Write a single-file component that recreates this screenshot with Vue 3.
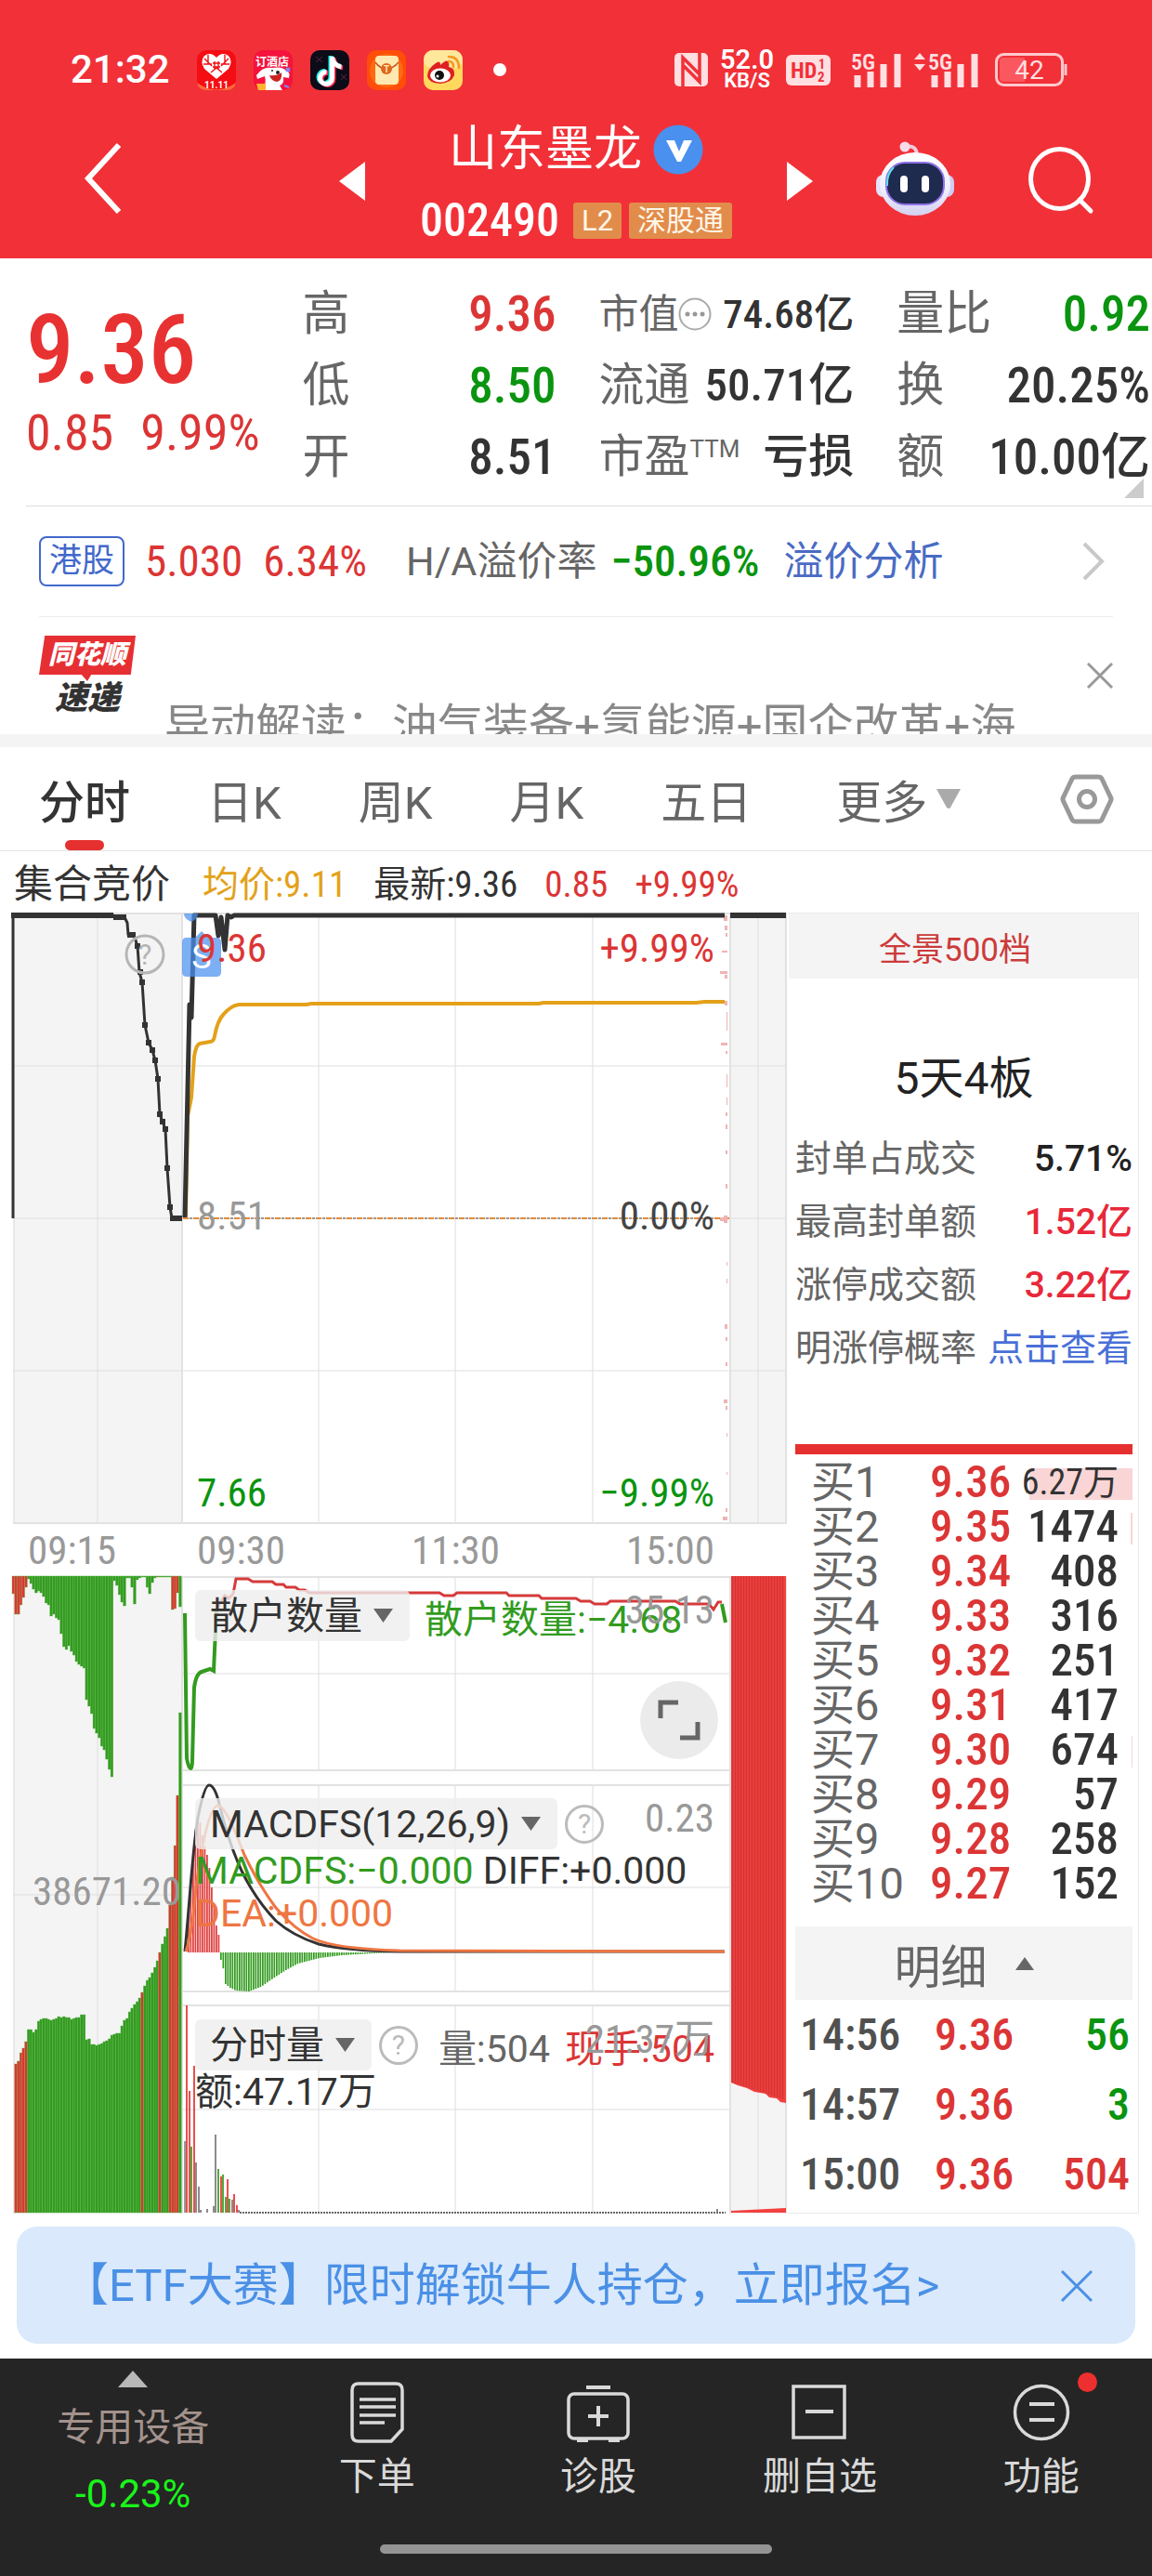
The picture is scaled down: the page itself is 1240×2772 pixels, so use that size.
<script setup>
const bids = [
  ['买1', '9.36', '6.27万', 111],
  ['买2', '9.35', '1474', 2],
  ['买3', '9.34', '408', 0],
  ['买4', '9.33', '316', 0],
  ['买5', '9.32', '251', 0],
  ['买6', '9.31', '417', 0],
  ['买7', '9.30', '674', 1],
  ['买8', '9.29', '57', 0],
  ['买9', '9.28', '258', 0],
  ['买10', '9.27', '152', 0]
]
const trades = [
  ['14:56', '9.36', '56', 'down'],
  ['14:57', '9.36', '3', 'down'],
  ['15:00', '9.36', '504', 'up']
]

const RED = '#e5302f'
const GREEN = '#329b1f'

// Call auction: unmatched volume hangs from the top, matched volume grows from the bottom
const unmatched = [19, 41, 41, 31, 23, 12, 3, 8, 14, 18, 16, 18, 22, 29, 31, 43, 41, 45, 47, 62, 76, 79, 75, 81, 85, 92, 95, 97, 99, 133, 140, 148, 164, 169, 174, 183, 187, 197, 208, 216, 5, 10, 20, 28, 32, 2, 2, 12, 30, 4, 2, 1, 1, 12, 19, 7, 2, 1, 1, 1, 1, 1, 1, 36, 35, 18, 33]
const unmatchedRed = [0, 1, 2, 3, 4, 5, 57, 63, 64, 65]
const matched = [0, 160, 163, 172, 177, 184, 197, 197, 194, 197, 206, 208, 209, 209, 208, 207, 208, 209, 211, 210, 211, 210, 210, 208, 209, 210, 210, 213, 213, 186, 187, 181, 181, 180, 181, 182, 184, 185, 187, 191, 192, 193, 193, 201, 207, 209, 216, 220, 224, 227, 231, 237, 244, 250, 253, 258, 264, 271, 280, 289, 297, 306, 331, 361, 395, 449, 538]
const matchedRed = [1, 2, 3, 4, 5, 51, 58, 62, 63, 64, 65]
const pitch = 2.72
const topBars = unmatched.map((h, i) => ({ x: 13 + i * pitch, h, c: unmatchedRed.includes(i) ? RED : GREEN }))
const bottomBars = matched.map((h, i) => ({ x: 13 + i * pitch, h, c: matchedRed.includes(i) ? RED : GREEN }))

const macdUp = [39, 72, 96, 131, 147, 140, 126, 114, 105, 91, 70, 51, 29, 19].map((h, i) => ({ x: 202 + i * 2.5, h }))
const knots = [[237, 8], [240, 19], [242, 34], [247, 38], [253, 41], [267, 42], [280, 37], [293, 28], [307, 19], [320, 12], [343, 6], [367, 3], [400, 1], [420, 0]]
const macdDown = []
for (let x = 237; x < 415; x += 2.5) {
  const k = knots.findIndex((p, i) => i < knots.length - 1 && x >= p[0] && x < knots[i + 1][0])
  const [a, b] = [knots[k], knots[k + 1]]
  macdDown.push({ x, h: a[1] + ((b[1] - a[1]) * (x - a[0])) / (b[0] - a[0]) })
}

const volume = [
  [199, 77, '#888'], [201, 223, RED], [204, 131, RED], [206, 71, GREEN], [209, 158, RED], [211, 54, '#777'], [214, 28, '#777'],
  [216, 3, '#777'], [223, 4, '#777'], [230, 7, '#777'], [232, 84, '#777'], [235, 47, GREEN], [238, 39, RED], [240, 41, GREEN],
  [243, 17, GREEN], [245, 36, RED], [247, 15, GREEN], [250, 14, '#777'], [252, 20, RED], [255, 8, RED], [257, 3, '#777'], [772, 4, '#777']
]
const ticks = [
  [984, 6, 4], [995, 5, 3], [1003, 4, 2], [1022, 2, 6], [1044, 3, 8], [1048, 4, 3], [1076, 5, 3], [1088, 20, 1], [1121, 3, 7],
  [1130, 3, 2], [1155, 14, 1], [1180, 8, 1], [1196, 4, 2], [1209, 5, 2], [1237, 4, 2], [1273, 5, 2], [1307, 8, 4], [1309, 4, 8],
  [1357, 4, 1], [1375, 5, 1], [1424, 5, 3], [1438, 4, 2], [1465, 4, 2], [1505, 4, 4], [1512, 4, 2], [1541, 4, 1], [1583, 3, 1], [1622, 4, 2], [1631, 4, 5]
]
</script>

<template>
  <div class="page">
    <header class="top">
      <div class="status">
        <span class="clock">21:32</span>
        <div class="apps">
          <svg viewBox="0 0 42 43">
            <rect width="42" height="43" rx="10" fill="#f40d12" />
            <path d="M0 35Q21 50 42 35Q40 43 32 43H10Q2 43 0 35Z" fill="#ff6a3a" />
            <path d="M21 31L8 20Q3 12 8 6Q15 1 21 8Q27 1 34 6Q39 12 34 20Z" fill="#fff" />
            <path d="M8 9l8 8M34 9l-8 8M12 5v10M30 5v10M7 15h9M35 15h-9M15 24l6-5 6 5M17 14h8M17 18h8M19 12v8M23 12v8" stroke="#f40d12" stroke-width="1.4" fill="none" />
            <text x="21" y="41" text-anchor="middle" font-size="10" font-weight="700" fill="#fff">11.11</text>
          </svg>
          <svg viewBox="0 0 42 43">
            <rect width="42" height="43" rx="10" fill="#f5123c" />
            <text x="20" y="17" text-anchor="middle" font-size="12" font-weight="700" fill="#fff">订酒店</text>
            <path d="M3 27Q10 17 20 19Q31 17 35 22Q40 24 38 30L32 29Q33 37 28 38L31 43H10Q14 35 12 28L4 31Z" fill="#fff" />
            <path d="M17 27Q25 28 30 24Q31 33 25 34Q19 33 17 27Z" fill="#c22" />
            <circle cx="26" cy="24" r="2" fill="#222" /><circle cx="20" cy="22" r="1" fill="#222" />
            <path d="M3 36h10v7H5z" fill="#ffb52e" /><path d="M35 19l4 4m0-4l-4 4M33 38l5 2" stroke="#7e8cff" stroke-width="2" />
          </svg>
          <svg viewBox="0 0 42 43">
            <rect width="42" height="43" rx="10" fill="#0b0c18" />
            <path d="M6 7l7 6M13 7l-7 6M33 26l6 6M39 26l-6 6" stroke="#5a2340" stroke-width="1" />
            <g fill="none" stroke-width="5">
              <path d="M22 6v23a6.500 6.500 0 1 1-6-6.500M22 7q2 9 10 10" stroke="#25f4ee" />
              <path d="M25 8v23a6.500 6.500 0 1 1-6-6.500M25 9q2 9 10 10" stroke="#fe2c55" />
              <path d="M23.500 7v23a6.500 6.500 0 1 1-6-6.500M23.500 8q2 9 10 10" stroke="#fff" />
            </g>
          </svg>
          <svg viewBox="0 0 42 43">
            <rect width="42" height="43" rx="10" fill="#ff4d0a" /><circle cx="21" cy="22" r="18" fill="#ff6a12" />
            <rect x="9" y="6" width="25" height="31" rx="4" fill="#ffe9b0" />
            <path d="M9 13q5 7 12 7t13-7" fill="none" stroke="#c9521b" stroke-width="1.500" />
            <circle cx="21" cy="20" r="6" fill="#e1651c" />
            <text x="21" y="24" text-anchor="middle" font-size="10" font-weight="700" fill="#ffe9b0">T</text>
          </svg>
          <svg viewBox="0 0 42 43">
            <rect width="42" height="43" rx="10" fill="#ffd95e" /><rect width="42" height="20" rx="10" fill="#ffe79c" />
            <path d="M4 28Q4 20 13 14Q18 10 18 16Q24 10 26 12Q28 14 27 18Q34 19 33 27Q30 35 18 36Q5 35 4 28Z" fill="#df2020" />
            <ellipse cx="18" cy="27" rx="11" ry="7.500" fill="#fff" /><circle cx="17" cy="27" r="5" fill="#111" /><circle cx="15" cy="28" r="1.500" fill="#fff" />
            <path d="M27 12q5 0 5 6M27 7q11 0 11 12" fill="none" stroke="#f59a23" stroke-width="2.500" stroke-linecap="round" />
          </svg>
          <i class="more-dot"></i>
        </div>
        <div class="signals">
          <svg class="nfc" viewBox="0 0 36 36">
            <rect width="36" height="36" rx="5" fill="#ffdfe1" />
            <path d="M9 36V5l17 17M27 0v31L10 14" fill="none" stroke="#f23038" stroke-width="3.500" />
          </svg>
          <span class="speed"><b>52.0</b><small>KB/S</small></span>
          <svg class="hd" viewBox="0 0 48 33">
            <rect width="48" height="33" rx="6" fill="#ffdfe1" />
            <text x="5" y="25" font-size="24" font-weight="700" class="cond" fill="#f23038">HD</text>
            <text x="35" y="15" font-size="14" font-weight="700" class="cond" fill="#f23038">1</text>
            <text x="34" y="29" font-size="15" font-weight="700" class="cond" fill="#f23038">2</text>
          </svg>
          <svg class="cell" viewBox="0 0 56 40">
            <text x="0" y="20" font-size="24" class="cond" fill="#ffdfe1" font-weight="600">5G</text>
            <path d="M7 26v13M21 22v17M35 14v25M50 3v36" stroke="#ffdfe1" stroke-width="7" />
          </svg>
          <svg class="cell wide" viewBox="0 0 71 40">
            <path d="M0 9l6-7 6 7zM0 14l6 7 6-7z" fill="#ffdfe1" />
            <text x="15" y="20" font-size="24" class="cond" fill="#ffdfe1" font-weight="600">5G</text>
            <path d="M22 26v13M36 22v17M50 14v25M65 3v36" stroke="#ffdfe1" stroke-width="7" />
          </svg>
          <svg class="battery" viewBox="0 0 78 36">
            <rect x="1.500" y="1.500" width="71" height="33" rx="8" fill="none" stroke="#ffc9cc" stroke-width="3" />
            <path d="M9 5h23v26H9q-4 0-4-4V9q0-4 4-4z" fill="#fa575e" />
            <path d="M76 12v12" stroke="#ffc9cc" stroke-width="3" />
            <text x="37" y="28" text-anchor="middle" font-size="28" fill="#ffdfe1">42</text>
          </svg>
        </div>
      </div>

      <nav class="nav">
        <div class="nav-left">
          <button aria-label="返回"><svg width="42" height="78" viewBox="0 0 42 78"><path d="M38 3L5 39L38 75" fill="none" stroke="#fff" stroke-width="6" /></svg></button>
        </div>
        <div class="nav-mid">
          <button aria-label="上一只"><svg width="28" height="42" viewBox="0 0 28 42"><path d="M28 0v42L0 21z" fill="#fff" /></svg></button>
          <div class="title">
            <h1>山东墨龙
              <svg width="54" height="54" viewBox="0 0 54 54"><circle cx="27" cy="27" r="26.500" fill="#4a90ee" /><path d="M14 17h9l5 12 5-12h9L30 40h-4z" fill="#fff" /></svg>
            </h1>
            <p><span class="code num">002490</span><span class="tag">L2</span><span class="tag">深股通</span></p>
          </div>
          <button aria-label="下一只"><svg width="28" height="42" viewBox="0 0 28 42"><path d="M0 0v42L28 21z" fill="#fff" /></svg></button>
        </div>
        <div class="nav-right">
          <button aria-label="智能助手">
            <svg width="84" height="80" viewBox="0 0 84 80">
              <defs><linearGradient id="shell" x1="0" y1="0" x2="0" y2="1"><stop offset="0" stop-color="#fff" /><stop offset=".6" stop-color="#f0eefc" /><stop offset="1" stop-color="#d3d0f0" /></linearGradient></defs>
              <path d="M31 6q13-3 13 10" fill="none" stroke="#f0c9dc" stroke-width="4" /><circle cx="31" cy="6" r="5.500" fill="#f6dbe8" />
              <rect x="0" y="36" width="16" height="24" rx="8" fill="#e3e2fa" /><rect x="68" y="36" width="16" height="24" rx="8" fill="#cfcdf3" />
              <ellipse cx="42" cy="46" rx="38" ry="34" fill="url(#shell)" />
              <rect x="11" y="23" width="62" height="45" rx="20" fill="#1f2a4f" stroke="#8f73e8" stroke-width="2" />
              <path d="M19 28Q11 36 12 48" fill="none" stroke="#5fe0e8" stroke-width="2" />
              <path d="M30 41v10M53 41v10" stroke="#fff" stroke-width="8" stroke-linecap="round" />
            </svg>
          </button>
          <button aria-label="搜索"><svg width="70" height="72" viewBox="0 0 70 72"><ellipse cx="33.500" cy="34.500" rx="31" ry="32" fill="none" stroke="#fff" stroke-width="5" /><path d="M55 57l12 12" stroke="#fff" stroke-width="5" stroke-linecap="round" /></svg></button>
        </div>
      </nav>
    </header>

    <section class="quote">
      <div class="last up num">
        <strong>9.36</strong>
        <p><span>0.85</span><span>9.99%</span></p>
      </div>
      <dl>
        <div><dt>高</dt><dd class="up">9.36</dd></div>
        <div><dt>低</dt><dd class="down">8.50</dd></div>
        <div><dt>开</dt><dd>8.51</dd></div>
      </dl>
      <dl class="caps">
        <div class="tight"><dt>市值<svg width="36" height="36" viewBox="0 0 36 36"><circle cx="18" cy="18" r="16.500" fill="none" stroke="#aaa" stroke-width="2" /><g fill="#999"><circle cx="10" cy="18" r="2.500" /><circle cx="18" cy="18" r="2.500" /><circle cx="26" cy="18" r="2.500" /></g></svg></dt><dd>74.68亿</dd></div>
        <div><dt>流通</dt><dd>50.71亿</dd></div>
        <div><dt>市盈<sup>TTM</sup></dt><dd>亏损</dd></div>
      </dl>
      <dl>
        <div><dt>量比</dt><dd class="down">0.92</dd></div>
        <div><dt>换</dt><dd>20.25%</dd></div>
        <div><dt>额</dt><dd>10.00亿</dd></div>
      </dl>
      <i class="corner"></i>
    </section>

    <section class="hk">
      <span class="hk-tag">港股</span>
      <span class="num up hk-price">5.030</span>
      <span class="num up hk-pct">6.34%</span>
      <span class="hk-label">H/A溢价率</span>
      <span class="num down hk-rate">−50.96%</span>
      <a href="#premium">溢价分析</a>
      <svg class="hk-arrow" width="26" height="44" viewBox="0 0 26 44"><path d="M3 3l19 19L3 41" fill="none" stroke="#c8c8c8" stroke-width="4" /></svg>
    </section>

    <section class="news">
      <div class="logo"><span class="logo-top">同花顺</span><span class="logo-bottom">速递</span></div>
      <p>异动解读：油气装备+氢能源+国企改革+海</p>
      <button aria-label="关闭"><svg width="28" height="28" viewBox="0 0 28 28"><path d="M1 1l26 26M27 1L1 27" stroke="#999" stroke-width="3" /></svg></button>
    </section>

    <nav class="tabs">
      <button class="active">分时</button>
      <button>日K</button>
      <button>周K</button>
      <button>月K</button>
      <button>五日</button>
      <button class="more">更多<svg width="26" height="21" viewBox="0 0 26 21"><path d="M0 0h26L15 20q-2 2-4 0z" fill="#aaa" /></svg></button>
      <button class="settings" aria-label="设置"><svg width="56" height="54" viewBox="0 0 56 54"><path d="M16 3h24q3 0 4 2l9 19q2 3 0 6l-9 19q-1 2-4 2H16q-3 0-4-2L3 30q-2-3 0-6l9-19q1-2 4-2z" fill="none" stroke="#999" stroke-width="5" /><circle cx="28" cy="27" r="8.500" fill="none" stroke="#999" stroke-width="5" /></svg></button>
    </nav>

    <div class="legend num">
      <span class="legend-name">集合竞价</span>
      <span class="avg">均价:9.11</span>
      <span>最新:9.36</span>
      <span class="up">0.85</span>
      <span class="up">+9.99%</span>
    </div>

    <main class="board">
      <div class="charts">
        <div class="plot">
          <svg viewBox="14 981 834 659" preserveAspectRatio="none">
            <path d="M14 982h183v657H14zM785 982h62v657H785z" fill="#f4f4f4" />
            <path d="M15 982v657M105 982v657M343 982v657M490 982v657M638 982v657M816 982v657M14 1146h833M14 1310h833M14 1474h833" class="grid" />
            <path d="M14 982h833M14 1638h833M196 982v657M786 982v657M846 982v657" class="frame" />
            <path d="M197 1310h588" stroke="#999" stroke-width="2" stroke-dasharray="3 8" stroke-dashoffset="-7" />
            <path d="M197 1310h588" stroke="#e08b3a" stroke-width="2" stroke-dasharray="6 5" />
            <g fill="#f0b3b3"><rect v-for="(t, i) in ticks" :key="i" :x="783 - t[2]" :y="t[0]" :width="t[2]" :height="t[1]" /></g>
            <path d="M200 1308L202 1200L206 1180L209 1136Q211 1123 215 1122L226 1120Q230 1120 231 1114Q234 1097 241 1090Q250 1080 258 1080H330L335 1079H580L585 1078H750L758 1077H780" fill="none" stroke="#e3a11a" stroke-width="4" />
            <path d="M14 1310V984H122L125 986H134L137 992L138 1005H144L148 1017L150 1045L153 1056L156 1102L160 1121L164 1129L167 1140L170 1160L172 1198L175 1206L178 1214L180 1256L183 1298L185 1310H196" class="price" stroke-width="3" />
            <path d="M12 984H122M122 986H136M137 1005h9M157 1121h6M183 1310h13" class="price" stroke-width="6" />
            <path d="M148 1014v6M151 1042v6M153 1053v6M156 1099v6M164 1126v6M167 1137v6M170 1157v6M172 1195v6M175 1203v6M178 1211v6M180 1253v6M183 1295v6" class="price" stroke-width="6" />
            <path d="M199 1309L204 1080L206 1094L209 984H232L235 1006L238 986L242 1021L245 984L249 986L252 984H780" class="price" stroke-width="5" />
            <path d="M786 984h60" class="price" stroke-width="6" />
            <path d="M198 982h15q0 6-7 9q-8-3-8-9zM210 1008l7-7 7 7h9q5 0 5 5v32q0 5-5 5h-32q-5 0-5-5v-32q0-5 5-5z" fill="#4a90ee" fill-opacity=".72" />
            <text x="217" y="1041" text-anchor="middle" font-size="36" fill="#fff">S</text>
            <circle cx="156" cy="1026" r="20" fill="none" stroke="#b5b5b5" stroke-width="3" />
            <text x="156" y="1037" text-anchor="middle" font-size="31" fill="#b5b5b5">?</text>
          </svg>
          <div class="plot-labels num">
            <p class="up"><span>9.36</span><span>+9.99%</span></p>
            <p class="mid"><span class="muted">8.51</span><span>0.00%</span></p>
            <p class="down"><span>7.66</span><span>−9.99%</span></p>
          </div>
        </div>

        <div class="axis num">
          <span>09:15</span>
          <p><span>09:30</span><span>11:30</span><span>15:00</span></p>
        </div>

        <div class="lower">
          <svg viewBox="14 1695 834 686" preserveAspectRatio="none">
            <path d="M14 1695h183v686H14zM785 1695h62v686H785z" fill="#f4f4f4" />
            <path d="M15 1695v686M105 1695v686M816 1695v686M14 2038h183M343 1695v209M490 1695v209M638 1695v209M343 1920v222M490 1920v222M638 1920v222M343 2157v223M490 2157v223M638 2157v223M197 1800h588M197 2030h588M197 2269h588" class="grid" />
            <path d="M197 1696h588M197 1904h588M197 1920h588M197 2142h588M197 2157h588M196 1695v686M786 1695v686M846 1695v686" class="frame" />
            <g stroke="#5db54b" stroke-width=".4">
              <rect v-for="(b, i) in topBars" :key="'t' + i" :x="b.x" y="1695" width="2.700" :height="b.h" :fill="b.c" />
              <rect v-for="(b, i) in bottomBars" :key="'b' + i" :x="b.x" :y="2380 - b.h" width="2.700" :height="b.h" :fill="b.c" />
            </g>
            <path d="M787 1695h59v567l-6-1l-4-4l-8-1l-4-4l-12-2l-8-4l-10-3l-7-3zM787 2380v-2l59-3v5z" fill="#f2413f" />
            <path v-for="i in 19" :key="'s' + i" :d="`M${785.5 + i * 3} 1695V${2239 + i}`" stroke="#d23433" stroke-width="1.500" />

            <path d="M199 1735L201 1891Q203 1902 205 1902Q207 1902 207 1894L209 1815Q211 1800 217 1798L226 1795L230 1797L233 1731" fill="none" :stroke="GREEN" stroke-width="4" />
            <path d="M233 1731L237 1724L242 1716L246 1719L251 1714L254 1698H267L272 1701H293L297 1704H305L308 1707H318L322 1710H328L333 1713H473L478 1716H488L492 1713H545L548 1716H580L583 1719H620L625 1722H635L640 1725H653L657 1722H727L732 1725H763L768 1731L773 1723H777" fill="none" stroke="#d63a3a" stroke-width="3" />
            <path d="M777 1725L781 1745" :stroke="GREEN" stroke-width="4" />

            <rect v-for="(b, i) in macdUp" :key="'u' + i" :x="b.x" :y="2100 - b.h" width="1.800" :height="b.h" fill="#e04444" />
            <rect v-for="(b, i) in macdDown" :key="'d' + i" :x="b.x" y="2100" width="1.700" :height="b.h" :fill="GREEN" />
            <path d="M199 2099C204 2050 207 1990 213 1955Q220 1920 225 1920Q231 1920 236 1940Q246 1982 260 2012Q275 2043 297 2066Q315 2082 343 2091Q373 2098 430 2099H780" fill="none" stroke="#333" stroke-width="3" />
            <path d="M200 2099Q207 2080 211 2030Q223 1942 235 1942Q243 1942 263 1995Q279 2028 297 2052Q317 2075 337 2085Q360 2096 430 2098L780 2099" fill="none" stroke="#ee7642" stroke-width="3" />

            <rect v-for="(v, i) in volume" :key="'v' + i" :x="v[0] - 1" :y="2380 - v[1]" width="2" :height="v[1]" :fill="v[2]" fill-opacity=".85" />
            <path d="M258 2380H781" stroke="#666" stroke-width="2" stroke-dasharray="2 1" />
          </svg>

          <span class="auction-value num">38671.20</span>

          <div class="panels">
            <div class="panel">
              <span class="scale num">35.13</span>
              <div class="panel-head">
                <label class="picker"><select aria-label="散户数量指标"><option>散户数量</option></select><i></i></label>
                <span class="green">散户数量:−4.68</span>
              </div>
              <button class="expand" aria-label="全屏"><svg width="46" height="46" viewBox="0 0 46 46"><path d="M3 21V4h19M43 25v17H24" fill="none" stroke="#666" stroke-width="5" /></svg></button>
            </div>
            <div class="panel">
              <span class="scale num">0.23</span>
              <div class="panel-head">
                <label class="picker"><select aria-label="MACD指标"><option>MACDFS(12,26,9)</option></select><i></i></label>
                <button class="help" aria-label="指标说明">?</button>
              </div>
              <p><span class="green">MACDFS:−0.000</span> DIFF:+0.000<br><span class="orange">DEA:+0.000</span></p>
            </div>
            <div class="panel">
              <span class="scale num">21.37万</span>
              <div class="panel-head">
                <label class="picker"><select aria-label="成交量指标"><option>分时量</option></select><i></i></label>
                <button class="help" aria-label="指标说明">?</button>
                <span class="vol">量:504</span>
                <span class="up hand">现手:504</span>
              </div>
              <p>额:47.17万</p>
            </div>
          </div>
        </div>
      </div>

      <aside class="book">
        <button class="depth">全景500档</button>
        <h2>5天4板</h2>
        <dl class="facts">
          <div><dt>封单占成交</dt><dd>5.71%</dd></div>
          <div><dt>最高封单额</dt><dd class="hot">1.52亿</dd></div>
          <div><dt>涨停成交额</dt><dd class="hot">3.22亿</dd></div>
          <div><dt>明涨停概率</dt><dd><a href="#odds">点击查看</a></dd></div>
        </dl>
        <table class="bids">
          <tbody>
            <tr v-for="b in bids" :key="b[0]">
              <th scope="row">{{ b[0] }}</th>
              <td class="up num">{{ b[1] }}</td>
              <td class="qty num" :class="{ small: b[2].includes('万') }"><i :style="{ width: b[3] + 'px' }"></i><span>{{ b[2] }}</span></td>
            </tr>
          </tbody>
        </table>
        <button class="detail">明细<svg width="20" height="14" viewBox="0 0 20 14"><path d="M0 14L10 0l10 14z" fill="#666" /></svg></button>
        <table class="trades num">
          <tbody>
            <tr v-for="t in trades" :key="t[0]"><td>{{ t[0] }}</td><td class="up">{{ t[1] }}</td><td :class="t[3]">{{ t[2] }}</td></tr>
          </tbody>
        </table>
      </aside>
    </main>

    <div class="banner">
      <a href="#etf">【ETF大赛】限时解锁牛人持仓，立即报名&gt;</a>
      <button aria-label="关闭"><svg width="34" height="34" viewBox="0 0 34 34"><path d="M1 1l32 32M33 1L1 33" stroke="#4a90e6" stroke-width="3" /></svg></button>
    </div>

    <footer class="dock">
      <div class="dock-items">
        <button class="sector">
          <svg width="32" height="18" viewBox="0 0 32 18"><path d="M16 0l16 18H0z" fill="#b8b8b8" /></svg>
          <span>专用设备</span>
          <b>-0.23%</b>
        </button>
        <button>
          <svg width="68" height="68" viewBox="0 0 68 68"><path d="M14 3h40q7 0 7 7v42L49 65H14q-7 0-7-7V10q0-7 7-7z" fill="none" stroke="#d9d9d9" stroke-width="3.500" /><path d="M15 20h39M15 28h39M15 37h39M15 45h27" stroke="#d9d9d9" stroke-width="3.500" /></svg>
          <span>下单</span>
        </button>
        <button>
          <svg width="68" height="68" viewBox="0 0 68 68"><rect x="2" y="14" width="64" height="48" rx="6" fill="none" stroke="#d9d9d9" stroke-width="3.500" /><path d="M21 7h26M23 38h22M34 27v22M11 64h12M45 64h12" stroke="#d9d9d9" stroke-width="4" /></svg>
          <span>诊股</span>
        </button>
        <button>
          <svg width="68" height="68" viewBox="0 0 68 68"><rect x="6" y="6" width="55" height="55" fill="none" stroke="#d9d9d9" stroke-width="3.500" /><path d="M19 33h30" stroke="#d9d9d9" stroke-width="4" /></svg>
          <span>删自选</span>
        </button>
        <button class="features">
          <svg width="68" height="68" viewBox="0 0 68 68"><circle cx="34" cy="34" r="28.500" fill="none" stroke="#d9d9d9" stroke-width="3.500" /><path d="M21 25h27M21 42h27" stroke="#d9d9d9" stroke-width="4" /></svg>
          <span>功能</span>
          <i></i>
        </button>
      </div>
      <i class="home"></i>
    </footer>
  </div>
</template>

<style>
body { background: #fff; }
</style>

<style scoped>
.page { font-family: Roboto, "Noto Sans CJK SC", sans-serif; color: #333; background: #fff; overflow: hidden; }
.page * { box-sizing: border-box; }
.num, .cond { font-family: "Roboto Condensed", Roboto, "Noto Sans CJK SC", sans-serif; }
button { border: 0; padding: 0; background: none; font: inherit; color: inherit; display: flex; align-items: center; justify-content: center; }
a { text-decoration: none; }
svg { display: block; flex: none; overflow: visible; }
p, h1, h2, dl, dd { margin: 0; font-weight: 400; }
i { font-style: normal; display: block; }
span { white-space: nowrap; }
.up { color: #dc3535; }
.down { color: #0a940f; }
.green { color: #329b1f; }
.orange { color: #ee7642; }
.muted { color: #999; }

.top { background: #f23038; color: #fff; }
.status { display: flex; align-items: center; height: 118px; padding: 32px 91px 0 76px; }
.clock { font-size: 42px; line-height: 48px; font-weight: 500; width: 136px; }
.apps { display: flex; align-items: center; gap: 19px; }
.apps svg { width: 42px; height: 43px; }
.more-dot { width: 14px; height: 14px; border-radius: 50%; background: #fff; margin-left: 14px; }
.signals { display: flex; align-items: center; margin-left: auto; }
.nfc { width: 36px; height: 36px; }
.speed { display: flex; flex-direction: column; align-items: center; width: 60px; margin: 0 12px; }
.speed b { font-size: 29px; line-height: 24px; font-weight: 600; }
.speed small { font-size: 22px; line-height: 22px; font-weight: 600; }
.hd { width: 48px; height: 33px; margin-right: 22px; }
.cell { width: 56px; height: 40px; margin-right: 12px; }
.cell.wide { width: 71px; margin-right: 16px; }
.battery { width: 78px; height: 36px; }

.nav { display: grid; grid-template-columns: 365fr 510fr 365fr; height: 160px; }
.nav-left { display: flex; align-items: flex-start; padding: 35px 0 0 90px; }
.nav-mid { display: flex; justify-content: space-between; align-items: flex-start; }
.nav-mid > button { margin-top: 56px; }
.nav-right { display: flex; align-items: flex-start; gap: 80px; padding: 34px 0 0 68px; }
.nav-right button:last-child { margin-top: 6px; }
.title { padding-top: 12px; }
.title h1 { display: flex; align-items: center; justify-content: center; gap: 12px; font-size: 52px; line-height: 62px; }
.title p { display: flex; align-items: center; justify-content: center; gap: 8px; height: 62px; margin-top: 14px; }
.code { font-size: 50px; line-height: 56px; margin-right: 7px; font-weight: 500; }
.tag { font-size: 31px; line-height: 39px; padding: 0 9px; background: #e28c4b; border-radius: 3px; color: #fff6e8; }

.quote { position: relative; display: grid; grid-template-columns: 249fr 274fr 276fr 274fr; gap: 46px; padding: 21px 2px 15px 28px; }
.quote::after { content: ""; position: absolute; left: 28px; right: 0; bottom: 0; height: 1px; background: #ddd; }
.last strong { display: block; font-size: 103px; line-height: 116px; font-weight: 500; margin-top: 20px; color: #e83232; }
.last p { display: flex; gap: 29px; font-size: 54px; line-height: 62px; }
.quote dl div { display: flex; justify-content: space-between; align-items: center; height: 77px; white-space: nowrap; }
.quote dt { font-size: 51px; line-height: 60px; color: #666; display: flex; align-items: center; }
.quote dd { font-family: "Roboto Condensed", Roboto, "Noto Sans CJK SC", sans-serif; font-size: 53px; line-height: 60px; font-weight: 500; }
.quote dl.caps dt, .quote dl.caps dd { font-size: 49px; }
.quote dl.caps .tight dt, .quote dl.caps .tight dd { font-size: 43px; }
.quote sup { font-size: 26px; line-height: 30px; align-self: flex-start; margin-top: 6px; }
.corner { position: absolute; right: 9px; bottom: 9px; width: 21px; height: 21px; background: #ccc; clip-path: polygon(100% 0, 100% 100%, 0 100%); }

.hk { display: flex; align-items: center; margin: 0 42px; height: 119px; border-bottom: 1px solid #eee; font-size: 43px; line-height: 50px; white-space: nowrap; }
.hk-tag { border: 2px solid #4268cc; border-radius: 8px; color: #4268cc; font-size: 35px; width: 92px; text-align: center; margin-right: 22px; }
.hk-price, .hk-pct, .hk-rate { font-size: 47px; }
.hk-pct { margin-left: 22px; }
.hk-label { color: #666; margin-left: 42px; }
.hk-rate { margin-left: 15px; font-weight: 500; }
.hk a { color: #4a6bc4; margin-left: 26px; }
.hk-arrow { margin: 0 8px 0 auto; }

.news { display: flex; align-items: flex-start; height: 140px; padding: 20px 42px 0; border-bottom: 14px solid #f4f4f4; overflow: hidden; }
.logo { width: 104px; display: flex; flex-direction: column; font-weight: 900; font-style: italic; text-align: center; }
.logo-top { background: #e62f33; color: #fff; font-size: 28px; line-height: 42px; height: 50px; clip-path: polygon(6% 0, 100% 0, 95% 84%, 54% 84%, 50% 98%, 44% 84%, 0 84%); }
.logo-bottom { font-size: 35px; line-height: 36px; }
.news p { flex: 1; font-size: 49px; line-height: 60px; margin: 68px 0 0 31px; color: #888; white-space: nowrap; }
.news button { margin-top: 29px; }

.tabs { display: flex; gap: 83px; height: 112px; padding: 0 42px; border-bottom: 1px solid #e5e5e5; font-size: 49px; color: #666; }
.tabs button { position: relative; gap: 10px; white-space: nowrap; }
.tabs .active { color: #333; font-weight: 500; }
.tabs .active::after { content: ""; position: absolute; left: 50%; bottom: 0; width: 42px; height: 11px; margin-left: -21px; border-radius: 6px; background: #e5302f; }
.tabs .more { margin-left: 8px; }
.tabs .settings { margin-left: auto; }

.legend { display: flex; align-items: center; gap: 29px; height: 66px; padding: 5px 15px 0; font-size: 39px; line-height: 50px; }
.legend-name { font-size: 42px; margin-right: 6px; }
.avg { color: #e3a11a; }

.board { display: grid; grid-template-columns: 834fr 378fr; margin: 0 14px; }
.grid { stroke: #dedede; stroke-width: 1; fill: none; }
.frame { stroke: #e2e2e2; stroke-width: 2; fill: none; }
.price { stroke: #333; fill: none; stroke-linejoin: round; }
.plot { position: relative; height: 659px; }
.plot > svg, .lower > svg { width: 100%; height: 100%; }
.plot-labels { position: absolute; inset: 0 63px 0 182px; padding: 14px 16px 11px; display: flex; flex-direction: column; justify-content: space-between; font-size: 43px; line-height: 48px; color: #444; }
.plot-labels p { display: flex; justify-content: space-between; }
.plot-labels .mid { margin-bottom: 10px; }
.plot-labels .up { color: #dc3535; }
.plot-labels .down { color: #0a940f; }
.axis { display: grid; grid-template-columns: 182fr 589fr 63fr; height: 55px; line-height: 55px; font-size: 43px; color: #999; }
.axis > span { padding-left: 16px; }
.axis p { display: flex; justify-content: space-between; padding: 0 16px; }

.lower { position: relative; height: 686px; font-size: 41px; }
.auction-value { position: absolute; left: 0; top: 315px; width: 181px; text-align: right; font-size: 43px; line-height: 48px; color: #999; }
.panels { position: absolute; inset: 0 63px 0 182px; }
.panel { position: relative; height: 224px; padding: 15px 16px 0 14px; }
.panel:nth-child(2) { height: 238px; }
.panel p { line-height: 46px; white-space: nowrap; }
.panel-head { display: flex; align-items: center; gap: 16px; height: 55px; white-space: nowrap; }
.scale { position: absolute; top: 12px; right: 16px; font-size: 43px; line-height: 48px; color: #999; }
.picker { position: relative; display: flex; align-items: center; height: 55px; padding: 0 18px 0 16px; gap: 12px; border-radius: 6px; background: rgba(238, 238, 238, .8); }
.picker select { appearance: none; border: 0; padding: 0; margin: 0; background: none; font: inherit; color: #333; line-height: 50px; }
.picker i { width: 21px; height: 15px; background: #666; clip-path: polygon(0 0, 100% 0, 50% 100%); }
.help { width: 42px; height: 42px; border: 3px solid #bbb; border-radius: 50%; color: #bbb; font-size: 30px; line-height: 36px; margin-left: -8px; }
.expand { position: absolute; right: 12px; top: 113px; width: 84px; height: 84px; border-radius: 50%; background: #ebebeb; }
.vol { color: #666; margin-left: 6px; }
.hand { margin-left: auto; }

.book { border: solid #eaeaea; border-width: 1px 1px 1px 0; height: 1400px; padding-left: 8px; padding-right: 6px; display: flex; flex-direction: column; }
.depth { height: 70px; margin: 0 -6px 0 -7px; padding-right: 18px; background: #f4f4f4; color: #cc3b3b; font-size: 35px; }
.book h2 { font-size: 48px; line-height: 60px; text-align: center; margin: 78px 0 22px; color: #222; }
.facts div { display: flex; justify-content: space-between; line-height: 68px; font-size: 39px; white-space: nowrap; }
.facts dt { color: #666; }
.facts dd { color: #222; font-weight: 500; }
.facts .hot { color: #e8283a; }
.facts a { color: #4a70d8; font-weight: 400; }
.bids { border-collapse: separate; border-spacing: 0; width: 100%; margin-top: 69px; padding-top: 6px; border-top: 11px solid #e5302f; }
.bids th { font-weight: 400; text-align: left; color: #666; font-size: 47px; padding: 0 0 0 17px; line-height: 48px; height: 48px; width: 145px; }
.bids td { padding: 0; font-size: 49px; font-weight: 500; line-height: 48px; height: 48px; }
.bids td.qty { position: relative; text-align: right; padding-right: 15px; }
.qty span { position: relative; }
.qty i { position: absolute; right: 0; top: 9px; height: 34px; background: #f9d5d6; }
.bids td.small { font-size: 38px; font-weight: 400; }
.detail { height: 79px; margin-top: 22px; background: #f4f4f4; color: #666; font-size: 50px; gap: 30px; flex: none; }
.trades { border-collapse: collapse; width: 100%; font-size: 48px; font-weight: 500; }
.trades td { padding: 0; height: 75px; color: #505050; }
.trades td:first-child { padding-left: 5px; width: 150px; }
.trades td:last-child { text-align: right; padding-right: 3px; }
.trades td.up { color: #dc3535; }
.trades td.down { color: #0a940f; }

.banner { display: flex; align-items: center; justify-content: space-between; height: 126px; margin: 14px 18px 16px; padding: 2px 46px 0 50px; border-radius: 22px; background: #dae9fb; }
.banner a { color: #4a90e6; font-size: 49px; line-height: 60px; white-space: nowrap; }

.dock { background: #252525; color: #d9d9d9; padding: 13px 0 25px; }
.dock-items { display: grid; grid-template-columns: 286fr repeat(4, 238fr); height: 187px; font-size: 41px; line-height: 50px; }
.dock-items button { position: relative; flex-direction: column; justify-content: flex-start; padding-top: 11px; gap: 10px; }
.dock-items .sector { padding-top: 0; gap: 18px; color: #a3928c; }
.sector b { font-weight: 400; font-size: 42px; color: #19f519; margin-top: 4px; }
.features i { position: absolute; left: 50%; top: 2px; margin-left: 39px; width: 21px; height: 21px; border-radius: 50%; background: #ee2f2f; }
.home { width: 34%; height: 10px; border-radius: 5px; background: #949494; margin: 0 auto; }
</style>
